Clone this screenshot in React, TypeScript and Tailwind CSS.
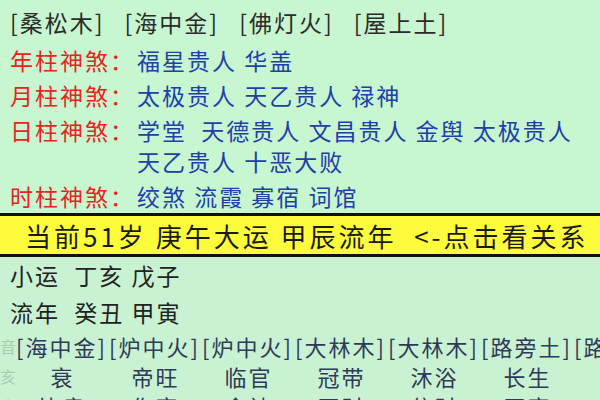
const font = { fontFamily: '"Noto Sans CJK SC", "Noto Sans", sans-serif' }

const shensha = [
  { label: '年柱神煞：', lines: ['福星贵人 华盖'] },
  { label: '月柱神煞：', lines: ['太极贵人 天乙贵人 禄神'] },
  { label: '日柱神煞：', lines: ['学堂  天德贵人 文昌贵人 金舆 太极贵人', '天乙贵人 十恶大败'] },
  { label: '时柱神煞：', lines: ['绞煞 流霞 寡宿 词馆'] },
]

const nayin = ['[海中金]', '[炉中火]', '[炉中火]', '[大林木]', '[大林木]', '[路旁土]', '[路']
const changsheng = ['衰', '帝旺', '临官', '冠带', '沐浴', '长生', '']
const shishen = ['比肩', '伤官', '食神', '正财', '偏财', '正官', '']

export default function App() {
  return (
    <div className="w-[600px] h-[400px] overflow-hidden bg-[#c7f6d0]" style={font}>
      {/* top: pillars */}
      <div className="flex gap-[20px] pl-[10px] pt-[6px] h-[45px] text-[23px] tracking-[2px] leading-[32px] text-[#2b2b2b]">
        <span>[桑松木]</span>
        <span>[海中金]</span>
        <span>[佛灯火]</span>
        <span>[屋上土]</span>
      </div>

      {/* shensha */}
      <div className="flex flex-col gap-[4px] pl-[10px] h-[168px]">
        {shensha.map((row) => (
          <div key={row.label} className="flex text-[23px] tracking-[2px] leading-[31px] whitespace-pre">
            <span className="w-[127px] shrink-0 text-[#e8231d]">{row.label}</span>
            <div className="flex flex-col text-[#2040a8]">
              {row.lines.map((l) => (
                <span key={l}>{l}</span>
              ))}
            </div>
          </div>
        ))}
      </div>

      {/* yellow bar */}
      <div className="h-[44px] bg-[#fdfc3c] border-y-[3px] border-[#111] pl-[25px] flex items-center text-[26px] tracking-[3px] text-[#1a1a1a] whitespace-pre">
        当前51岁 庚午大运 甲辰流年  &lt;-点击看关系
      </div>

      <div className="bg-[#c9f2d2] h-[143px]">
        <div className="pl-[10px] text-[23px] tracking-[2px] leading-[37px] text-[#222]">
          <div className="whitespace-pre">小运  丁亥 戊子</div>
          <div className="whitespace-pre">流年  癸丑 甲寅</div>
        </div>

        <div className="flex">
          <div className="w-[18px] flex flex-col items-center text-[16px] leading-[30px] text-[#a6cfb0]">
            <span>音</span>
            <span>亥</span>
            <span>十</span>
          </div>
          <div className="flex flex-col text-[22px] tracking-[2px] text-[#2e3a58]">
            <div className="flex h-[30px] items-center">
              {nayin.map((n, i) => (
                <span key={i} className="w-[93px] shrink-0 whitespace-nowrap">
                  {n}
                </span>
              ))}
            </div>
            <div className="flex h-[30px] items-center">
              {changsheng.map((n, i) => (
                <span key={i} className="w-[93px] shrink-0 text-center">
                  {n}
                </span>
              ))}
            </div>
            <div className="flex h-[30px] items-center">
              {shishen.map((n, i) => (
                <span key={i} className="w-[93px] shrink-0 text-center">
                  {n}
                </span>
              ))}
            </div>
          </div>
        </div>
      </div>
    </div>
  )
}
